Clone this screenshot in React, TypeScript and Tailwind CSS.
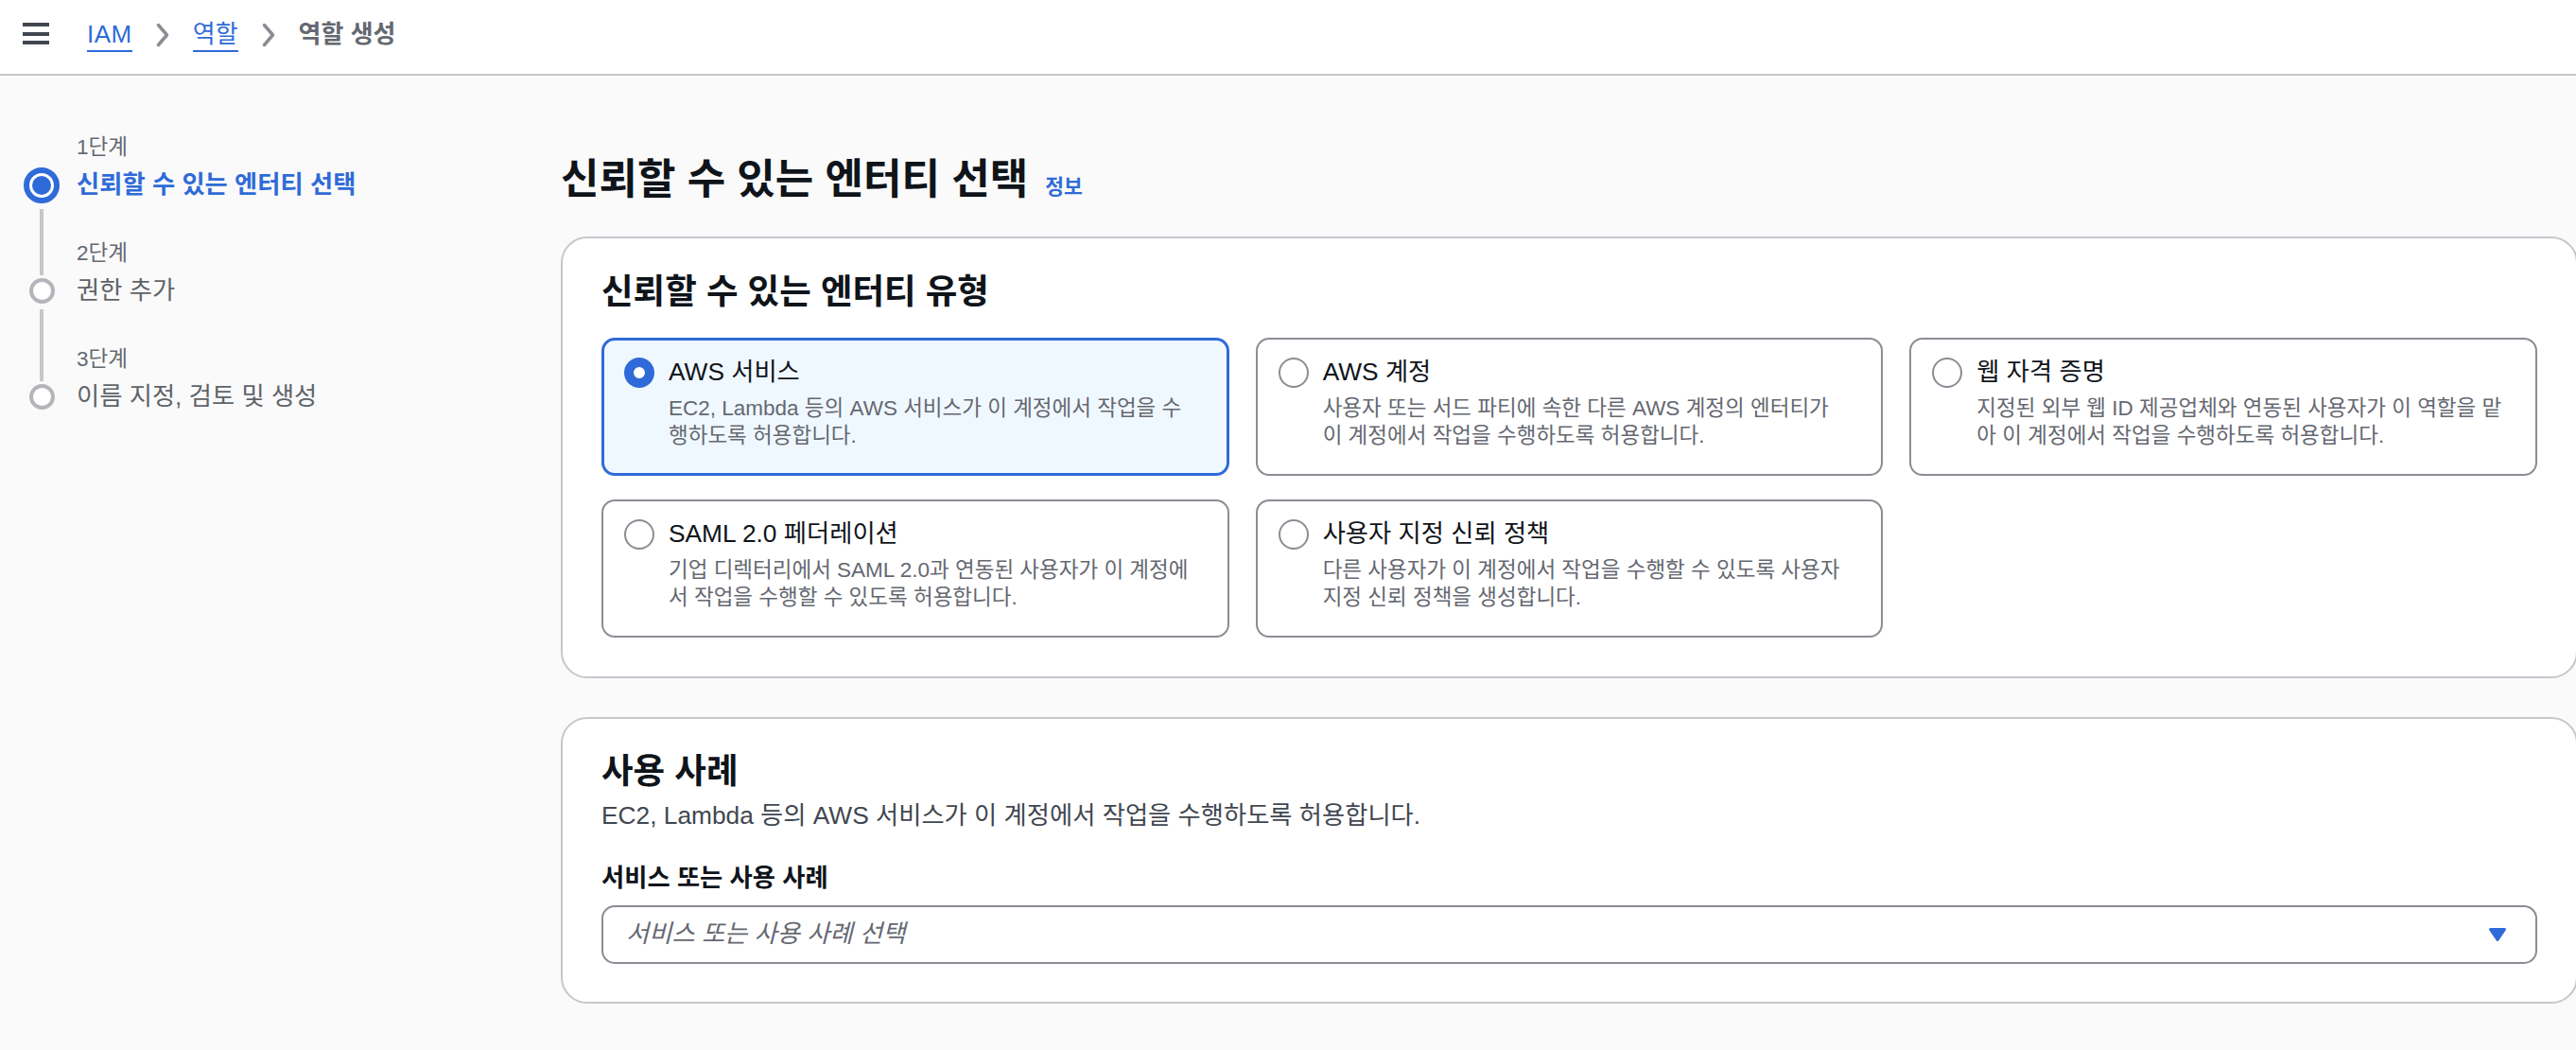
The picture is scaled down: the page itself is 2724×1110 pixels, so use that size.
import React from 'react';

// IAM "역할 생성" wizard, step 1: pick the trusted entity type.
const BLUE = 'text-[#2f6bd8]';

const steps = [
  { label: '1단계', title: '신뢰할 수 있는 엔터티 선택', active: true },
  { label: '2단계', title: '권한 추가', active: false },
  { label: '3단계', title: '이름 지정, 검토 및 생성', active: false },
];

const tiles = [
  {
    title: 'AWS 서비스',
    desc: 'EC2, Lambda 등의 AWS 서비스가 이 계정에서 작업을 수행하도록 허용합니다.',
    selected: true,
  },
  {
    title: 'AWS 계정',
    desc: '사용자 또는 서드 파티에 속한 다른 AWS 계정의 엔터티가 이 계정에서 작업을 수행하도록 허용합니다.',
  },
  {
    title: '웹 자격 증명',
    desc: '지정된 외부 웹 ID 제공업체와 연동된 사용자가 이 역할을 맡아 이 계정에서 작업을 수행하도록 허용합니다.',
  },
  {
    title: 'SAML 2.0 페더레이션',
    desc: '기업 디렉터리에서 SAML 2.0과 연동된 사용자가 이 계정에서 작업을 수행할 수 있도록 허용합니다.',
  },
  {
    title: '사용자 지정 신뢰 정책',
    desc: '다른 사용자가 이 계정에서 작업을 수행할 수 있도록 사용자 지정 신뢰 정책을 생성합니다.',
  },
];

function Chevron() {
  return (
    <svg width="14" height="26" viewBox="0 0 14 26" className="mt-[2px] shrink-0" aria-hidden>
      <polyline
        points="2.5,2.5 11.5,13 2.5,23.5"
        fill="none"
        stroke="#8c8c94"
        strokeWidth="3.5"
        strokeLinecap="round"
        strokeLinejoin="round"
      />
    </svg>
  );
}

function Header() {
  return (
    <header className="flex h-[80px] items-start border-b-2 border-[#c6c6cd] bg-white px-[24px] pt-[22px]">
      <div className="mt-[2px] flex w-[28px] flex-col gap-[5.5px]">
        <span className="h-[4px] bg-[#414750]" />
        <span className="h-[4px] bg-[#414750]" />
        <span className="h-[4px] bg-[#414750]" />
      </div>
      <nav className="ml-[40px] flex items-start gap-[25px] text-[26px] leading-[28px]">
        <a className={`${BLUE} border-b-2 border-[#2f6bd8] pb-[3px] tracking-[0.5px]`}>IAM</a>
        <Chevron />
        <a className={`${BLUE} border-b-2 border-[#2f6bd8] pb-[3px]`}>역할</a>
        <Chevron />
        <span className="font-bold text-[#656871]">역할 생성</span>
      </nav>
    </header>
  );
}

function StepCircle({ active }: { active: boolean }) {
  if (active) {
    return (
      <div className="flex h-[38px] w-[38px] shrink-0 items-center justify-center rounded-full border-[6px] border-[#2f6bd8] bg-white">
        <div className="h-[20px] w-[20px] rounded-full bg-[#2f6bd8]" />
      </div>
    );
  }
  return <div className="h-[27px] w-[27px] shrink-0 rounded-full border-[4px] border-[#b4b4bb] bg-white" />;
}

function Steps() {
  return (
    <div className="flex flex-col">
      {steps.map((s, i) => {
        const first = i === 0;
        const last = i === steps.length - 1;
        return (
          <div key={s.label} className={last ? 'flex' : 'flex h-[112px]'}>
            <div className="flex w-[40px] shrink-0 flex-col items-center">
              {first ? (
                <div className="h-[35px]" />
              ) : (
                <div className="mb-[3px] h-[37px] w-[4px] bg-[#c6c6cd]" />
              )}
              <StepCircle active={s.active} />
              {!last && <div className="mt-[6px] w-[4px] flex-1 bg-[#c6c6cd]" />}
            </div>
            <div className="ml-[17px] flex flex-col">
              <div className="text-[22.5px] leading-[28px] text-[#656871]">{s.label}</div>
              <div
                className={
                  s.active
                    ? `mt-[8px] text-[26.3px] font-bold leading-[35px] ${BLUE}`
                    : 'mt-[8px] text-[26.3px] leading-[35px] text-[#5f6369]'
                }
              >
                {s.title}
              </div>
            </div>
          </div>
        );
      })}
    </div>
  );
}

function Radio({ checked }: { checked?: boolean }) {
  return checked ? (
    <div className="mt-[2px] h-[32px] w-[32px] shrink-0 rounded-full border-[10px] border-[#2f6bd8] bg-white" />
  ) : (
    <div className="mt-[2px] h-[32px] w-[32px] shrink-0 rounded-full border-2 border-[#8c8c94] bg-white" />
  );
}

function Tile({ title, desc, selected }: { title: string; desc: string; selected?: boolean }) {
  return (
    <div
      className={
        selected
          ? 'flex gap-[15px] rounded-[14px] border-[3px] border-[#2f6bd8] bg-[#f0f8ff] pb-[25px] pl-[21px] pr-[29px] pt-[16px]'
          : 'flex gap-[15px] rounded-[14px] border-2 border-[#8c8c94] bg-white pb-[26px] pl-[22px] pr-[30px] pt-[17px]'
      }
    >
      <Radio checked={selected} />
      <div className="min-w-0 flex-1">
        <div className="text-[26.3px] leading-[35px] text-[#0f141a]">{title}</div>
        <div className="mt-[6px] text-[22.5px] leading-[29px] text-[#656871]">{desc}</div>
      </div>
    </div>
  );
}

export default function App() {
  return (
    <div className="h-[1110px] w-[2724px] overflow-hidden bg-[#fafafa] font-[family-name:'Liberation_Sans','Noto_Sans_CJK_KR',sans-serif]">
      <Header />
      <div className="flex">
        <aside className="w-[593px] shrink-0 pl-[24px] pt-[62px]">
          <Steps />
        </aside>

        <main className="w-[2133px] shrink-0 pt-[85px]">
          <div className="flex items-baseline gap-[18px]">
            <h1 className="text-[44px] font-bold leading-[50px] text-[#0f141a]">신뢰할 수 있는 엔터티 선택</h1>
            <a className={`text-[21.5px] font-bold ${BLUE}`}>정보</a>
          </div>

          <section className="mt-[35px] rounded-[28px] border-2 border-[#c6c6cd] bg-white px-[41px] pb-[41px] pt-[36px]">
            <h2 className="text-[36.5px] font-bold leading-[42px] text-[#0f141a]">신뢰할 수 있는 엔터티 유형</h2>
            <div className="mt-[27px] grid grid-cols-3 gap-x-[28px] gap-y-[25px]">
              {tiles.map((t) => (
                <Tile key={t.title} {...t} />
              ))}
            </div>
          </section>

          <section className="mt-[41px] rounded-[28px] border-2 border-[#c6c6cd] bg-white px-[41px] pb-[40px] pt-[35px]">
            <h2 className="text-[36.5px] font-bold leading-[42px] text-[#0f141a]">사용 사례</h2>
            <p className="mt-[8px] text-[26.3px] leading-[35px] text-[#414750]">
              EC2, Lambda 등의 AWS 서비스가 이 계정에서 작업을 수행하도록 허용합니다.
            </p>
            <div className="mt-[31px] text-[26.3px] font-bold leading-[35px] text-[#0f141a]">서비스 또는 사용 사례</div>
            <div className="mt-[11px] flex h-[62px] items-center justify-between rounded-[14px] border-2 border-[#8c8c94] bg-white pl-[24px] pr-[30px]">
              <span className="text-[26.3px] italic text-[#656871]">서비스 또는 사용 사례 선택</span>
              <svg width="20" height="16" viewBox="0 0 20 16" aria-hidden>
                <path
                  d="M2.5 2.5 H17.5 L10 13.5 Z"
                  fill="#2f6bd8"
                  stroke="#2f6bd8"
                  strokeWidth="3"
                  strokeLinejoin="round"
                />
              </svg>
            </div>
          </section>
        </main>
      </div>
    </div>
  );
}
